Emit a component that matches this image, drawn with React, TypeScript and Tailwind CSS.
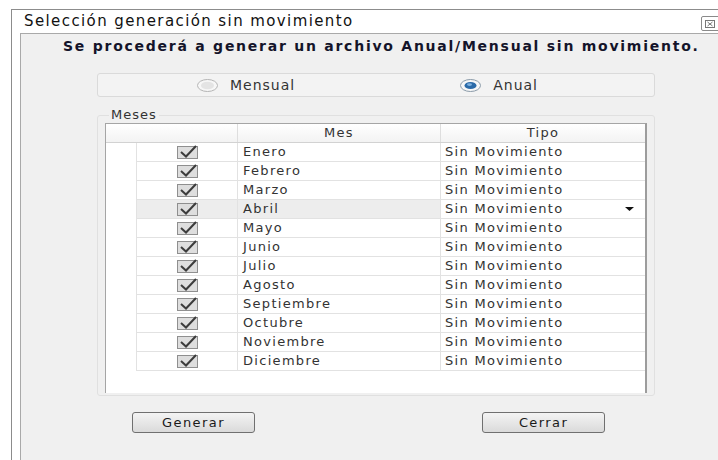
import React from "react";

const meses = [
  "Enero",
  "Febrero",
  "Marzo",
  "Abril",
  "Mayo",
  "Junio",
  "Julio",
  "Agosto",
  "Septiembre",
  "Octubre",
  "Noviembre",
  "Diciembre",
];

function CheckMark() {
  return (
    <svg width="21" height="14" viewBox="0 0 21 14">
      <rect x="0.5" y="1.5" width="20" height="12" fill="#dedede" stroke="#8f8f8f" />
      <path d="M4 7 L9 11.5 L19 1" stroke="#3c3c3c" strokeWidth="2" fill="none" />
    </svg>
  );
}

function Radio({ checked }: { checked?: boolean }) {
  return (
    <svg width="21" height="13" viewBox="0 0 21 13">
      <ellipse cx="10.5" cy="6.5" rx="10" ry="6" fill="#f7f7f7" stroke={checked ? "#8a9aa8" : "#b4b4b4"} />
      {checked ? (
        <>
          <ellipse cx="10.5" cy="6.5" rx="6" ry="3.6" fill="#2b6aa8" />
          <ellipse cx="9.5" cy="5.6" rx="2.5" ry="1.3" fill="#7fb2e0" />
        </>
      ) : (
        <ellipse cx="10.5" cy="6.5" rx="6.5" ry="3.8" fill="#e4e4e4" />
      )}
    </svg>
  );
}

function Boton({ label }: { label: string }) {
  return (
    <button className="w-[123px] h-[21px] rounded-[3px] border border-[#707070] bg-gradient-to-b from-[#f4f4f4] to-[#dadada] text-[13px] tracking-[1.4px] text-[#1a1a1a] leading-none">
      {label}
    </button>
  );
}

export default function App() {
  return (
    <div className="w-[718px] h-[460px] bg-white overflow-hidden font-['DejaVu_Sans',sans-serif] text-[#222]">
      <div className="ml-[11px] mt-[9px] h-[451px] border-l border-t border-[#8c8c8c] flex flex-col">
        {/* barra de título */}
        <div className="h-[23px] flex items-center pl-[12px] text-[15px] tracking-[1.4px] text-[#111]">
          <span>Selección generación sin movimiento</span>
          <div className="ml-auto mr-[-6px] mt-[4px] w-[23px] h-[15px] border border-[#8a8a8a] rounded-[2px] bg-white flex items-center pl-[3px]">
            <svg width="10" height="8" viewBox="0 0 10 8">
              <rect x="0.5" y="0.5" width="9" height="7" fill="none" stroke="#777" />
              <path d="M2.5 2 L7.5 6 M7.5 2 L2.5 6" stroke="#777" />
            </svg>
          </div>
        </div>

        <div className="flex-1 ml-[8px] border-l border-t border-[#a9a9a9] bg-[#f0f0f0] flex flex-col">
          <div className="mt-[4px] pl-[42px] text-[14px] leading-[16px] font-bold tracking-[1.75px] text-[#14142a]">
            Se procederá a generar un archivo Anual/Mensual sin movimiento.
          </div>

          {/* tipo de archivo */}
          <div className="mt-[19px] ml-[76px] w-[558px] h-[24px] rounded-[3px] border border-[#dadada] bg-[#f3f3f3] flex items-center text-[14px] tracking-[1px] text-[#333]">
            <div className="ml-[99px] flex items-center">
              <Radio />
              <span className="ml-[12px]">Mensual</span>
            </div>
            <div className="ml-[165px] flex items-center">
              <Radio checked />
              <span className="ml-[12px]">Anual</span>
            </div>
          </div>

          {/* grupo meses */}
          <fieldset className="mt-[10px] ml-[76px] w-[558px] border border-[#e0e0e0] rounded-[3px] px-[7px] pb-[2px]">
            <legend className="ml-[4px] px-[2px] text-[13px] tracking-[1px] text-[#333] leading-[16px]">Meses</legend>
            <div className="h-[270px] bg-white border-l border-t border-[#a5a5a5] border-r-2 border-r-[#9c9c9c] text-[13px] tracking-[1.3px] text-[#333]">
              <div className="h-[19px] flex border-b border-[#d2d2d2] bg-gradient-to-b from-white to-[#f3f3f3]">
                <div className="w-[132px] border-r border-[#dedede]" />
                <div className="w-[203px] border-r border-[#dedede] flex items-center justify-center">Mes</div>
                <div className="flex-1 flex items-center justify-center">Tipo</div>
              </div>
              {meses.map((mes) => {
                const sel = mes === "Abril";
                return (
                  <div key={mes} className="h-[19px] flex">
                    <div className="w-[31px] border-r border-[#e2e2e2]" />
                    <div
                      className={`w-[101px] border-r border-b border-[#e2e2e2] flex items-center justify-center ${sel ? "bg-[#ededed]" : ""}`}
                    >
                      <CheckMark />
                    </div>
                    <div
                      className={`w-[203px] border-r border-b border-[#e2e2e2] flex items-center pl-[5px] ${sel ? "bg-[#ededed]" : ""}`}
                    >
                      {mes}
                    </div>
                    <div className="flex-1 border-b border-[#e2e2e2] flex items-center pl-[4px]">
                      <span>Sin Movimiento</span>
                      {sel && (
                        <svg className="ml-auto mr-[11px]" width="9" height="4" viewBox="0 0 9 4">
                          <path d="M0 0 H9 L4.5 4 Z" fill="#111" />
                        </svg>
                      )}
                    </div>
                  </div>
                );
              })}
            </div>
          </fieldset>

          <div className="mt-[16px] ml-[111px] flex gap-[227px]">
            <Boton label="Generar" />
            <Boton label="Cerrar" />
          </div>
        </div>
      </div>
    </div>
  );
}
